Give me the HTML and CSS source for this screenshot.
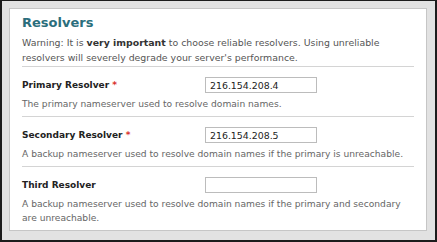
FILE: index.html
```html
<!DOCTYPE html>
<html lang="en">
<head>
  <meta charset="UTF-8"/>
  <title>Resolvers</title>
  <link rel="stylesheet" href="styles.css">
</head>
<body>
  <div class="frame">
    <div class="panel">
      <h2 class="title">Resolvers</h2>
      <p class="warning">Warning: It is <b>very important</b> to choose reliable resolvers. Using unreliable resolvers will severely degrade your server's performance.</p>

      <div class="field">
        <div class="row">
          <label class="label">Primary Resolver <span class="req">*</span></label>
          <input class="input" type="text" value="216.154.208.4">
        </div>
        <div class="desc">The primary nameserver used to resolve domain names.</div>
      </div>

      <div class="field">
        <div class="row">
          <label class="label">Secondary Resolver <span class="req">*</span></label>
          <input class="input" type="text" value="216.154.208.5">
        </div>
        <div class="desc">A backup nameserver used to resolve domain names if the primary is unreachable.</div>
      </div>

      <div class="field last">
        <div class="row">
          <label class="label">Third Resolver</label>
          <input class="input" type="text" value="">
        </div>
        <div class="desc">A backup nameserver used to resolve domain names if the primary and secondary are unreachable.</div>
      </div>
    </div>
  </div>
</body>
</html>
```

FILE: styles.css
```css
body {
  margin: 0;
  padding: 0;
  background: #1c1c1c;
  font-family: 'DejaVu Sans', Verdana, sans-serif;
}
.frame {
  width: 433px;
  height: 239px;
  margin-left: 2px;
  margin-top: 1px;
  background: #e2e2e2;
  padding: 7px 0 0 7px;
  box-sizing: border-box;
}
.panel {
  width: 418px;
  height: 223px;
  box-sizing: border-box;
  background: #fff;
  border: 1px solid #c6c6c6;
  padding: 6px 12px 0 12px;
}
.title {
  margin: 0;
  font-size: 13px;
  line-height: 16px;
  font-weight: bold;
  color: #2b6e7c;
}
.warning {
  margin: 4px 0 0;
  padding-bottom: 1px;
  font-size: 9.4px;
  line-height: 15px;
  color: #555;
  border-bottom: 1px solid #d4d4d4;
}
.warning b {
  color: #333;
}
.field {
  padding: 10px 0 5px;
  border-bottom: 1px solid #d4d4d4;
}
.field.last {
  border-bottom: none;
}
.row {
  display: flex;
  align-items: center;
  height: 16px;
}
.label {
  width: 183px;
  font-size: 9px;
  font-weight: bold;
  color: #222;
}
.req {
  color: #d9322e;
}
.input {
  width: 112px;
  height: 16px;
  box-sizing: border-box;
  margin: 0;
  padding: 0 4px;
  border: 1px solid #bcbcbc;
  font-family: 'DejaVu Sans', Verdana, sans-serif;
  font-size: 9.4px;
  color: #222;
}
.desc {
  margin-top: 4px;
  font-size: 9.15px;
  line-height: 14px;
  color: #666;
}
```
